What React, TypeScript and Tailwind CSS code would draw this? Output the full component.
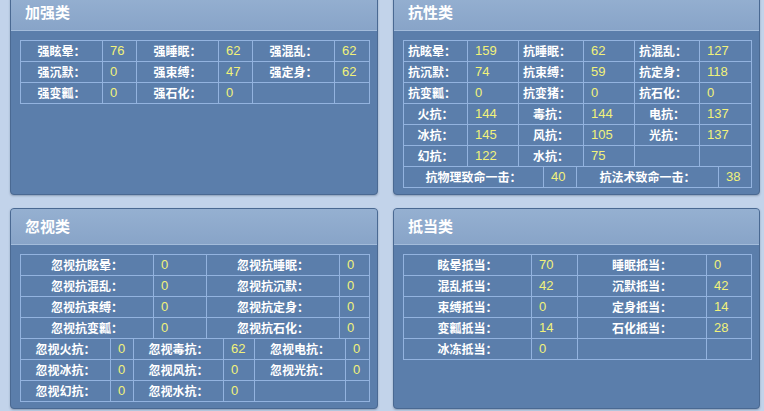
type Cell = { text: string; kind: "label" | "value" | "empty"; align?: "left" | "center" };

const LINE = "border border-[#93b3df]";

function label(text: string, align: "left" | "center" = "center"): Cell {
  return { text, kind: "label", align };
}

function value(text: string): Cell {
  return { text, kind: "value" };
}

const EMPTY: Cell = { text: "", kind: "empty" };

function StatTable({ widths, rows }: { widths: number[]; rows: Cell[][] }) {
  return (
    <table className="table-fixed border-collapse" style={{ width: widths.reduce((a, b) => a + b, 0) }}>
      <colgroup>
        {widths.map((w, i) => (
          <col key={i} style={{ width: w }} />
        ))}
      </colgroup>
      <tbody>
        {rows.map((row, r) => (
          <tr key={r} className="h-[21px]">
            {row.map((cell, c) => (
              <td
                key={c}
                className={[
                  LINE,
                  "p-0 whitespace-nowrap leading-[20px]",
                  cell.kind === "value"
                    ? "pl-[7px] text-left text-[13px] text-[#f2f27a] font-['Liberation_Sans',sans-serif]"
                    : "",
                  cell.kind === "label"
                    ? cell.align === "left"
                      ? "pl-[4px] text-left text-[12px] font-bold text-white"
                      : "text-center text-[12px] font-bold text-white"
                    : "",
                ].join(" ")}
              >
                {cell.text}
              </td>
            ))}
          </tr>
        ))}
      </tbody>
    </table>
  );
}

function Panel({ title, children }: { title: string; children: React.ReactNode }) {
  return (
    <section className="h-[201px] overflow-hidden rounded-[4px] border border-[#4a6992] bg-[#5b7eab] shadow-[0_1px_2px_rgba(40,60,90,0.35)]">
      <div className="flex h-[36px] items-center border-b border-[#a3bcdb] bg-gradient-to-b from-[#95b0d1] to-[#88a4c8] pl-[14px] text-[15px] font-bold text-white">
        {title}
      </div>
      <div className="pl-[9px] pt-[9px]">{children}</div>
    </section>
  );
}

export default function App() {
  const strengthen: Cell[][] = [
    [label("强眩晕："), value("76"), label("强睡眠："), value("62"), label("强混乱："), value("62")],
    [label("强沉默："), value("0"), label("强束缚："), value("47"), label("强定身："), value("62")],
    [label("强变瓤："), value("0"), label("强石化："), value("0"), EMPTY, EMPTY],
  ];

  const resist: Cell[][] = [
    [label("抗眩晕：", "left"), value("159"), label("抗睡眠：", "left"), value("62"), label("抗混乱：", "left"), value("127")],
    [label("抗沉默：", "left"), value("74"), label("抗束缚：", "left"), value("59"), label("抗定身：", "left"), value("118")],
    [label("抗变瓤：", "left"), value("0"), label("抗变猪：", "left"), value("0"), label("抗石化：", "left"), value("0")],
    [label("火抗："), value("144"), label("毒抗："), value("144"), label("电抗："), value("137")],
    [label("冰抗："), value("145"), label("风抗："), value("105"), label("光抗："), value("137")],
    [label("幻抗："), value("122"), label("水抗："), value("75"), EMPTY, EMPTY],
  ];

  const critical: Cell[][] = [
    [label("抗物理致命一击："), value("40"), label("抗法术致命一击："), value("38")],
  ];

  const ignoreTop: Cell[][] = [
    [label("忽视抗眩晕："), value("0"), label("忽视抗睡眠："), value("0")],
    [label("忽视抗混乱："), value("0"), label("忽视抗沉默："), value("0")],
    [label("忽视抗束缚："), value("0"), label("忽视抗定身："), value("0")],
    [label("忽视抗变瓤："), value("0"), label("忽视抗石化："), value("0")],
  ];

  const ignoreBottom: Cell[][] = [
    [label("忽视火抗："), value("0"), label("忽视毒抗："), value("62"), label("忽视电抗："), value("0")],
    [label("忽视冰抗："), value("0"), label("忽视风抗："), value("0"), label("忽视光抗："), value("0")],
    [label("忽视幻抗："), value("0"), label("忽视水抗："), value("0"), EMPTY, EMPTY],
  ];

  const offset: Cell[][] = [
    [label("眩晕抵当："), value("70"), label("睡眠抵当："), value("0")],
    [label("混乱抵当："), value("42"), label("沉默抵当："), value("42")],
    [label("束缚抵当："), value("0"), label("定身抵当："), value("14")],
    [label("变瓤抵当："), value("14"), label("石化抵当："), value("28")],
    [label("冰冻抵当："), value("0"), EMPTY, EMPTY],
  ];

  return (
    <div className="h-[411px] w-[764px] overflow-hidden bg-[#c2d3ea] font-['Noto_Sans_CJK_SC',sans-serif]">
      <div className="mt-[-6px] grid grid-cols-[368px_367px] gap-x-[15px] gap-y-[13px] pl-[10px]">
        <Panel title="加强类">
          <StatTable widths={[82, 34, 82, 34, 82, 35]} rows={strengthen} />
        </Panel>
        <Panel title="抗性类">
          <StatTable widths={[64, 51, 65, 51, 65, 52]} rows={resist} />
          <div className="-mt-px">
            <StatTable widths={[140, 33, 142, 33]} rows={critical} />
          </div>
        </Panel>
        <Panel title="忽视类">
          <StatTable widths={[133, 53, 133, 30]} rows={ignoreTop} />
          <div className="-mt-px">
            <StatTable widths={[90, 23, 90, 31, 91, 24]} rows={ignoreBottom} />
          </div>
        </Panel>
        <Panel title="抵当类">
          <StatTable widths={[128, 46, 129, 45]} rows={offset} />
        </Panel>
      </div>
    </div>
  );
}
